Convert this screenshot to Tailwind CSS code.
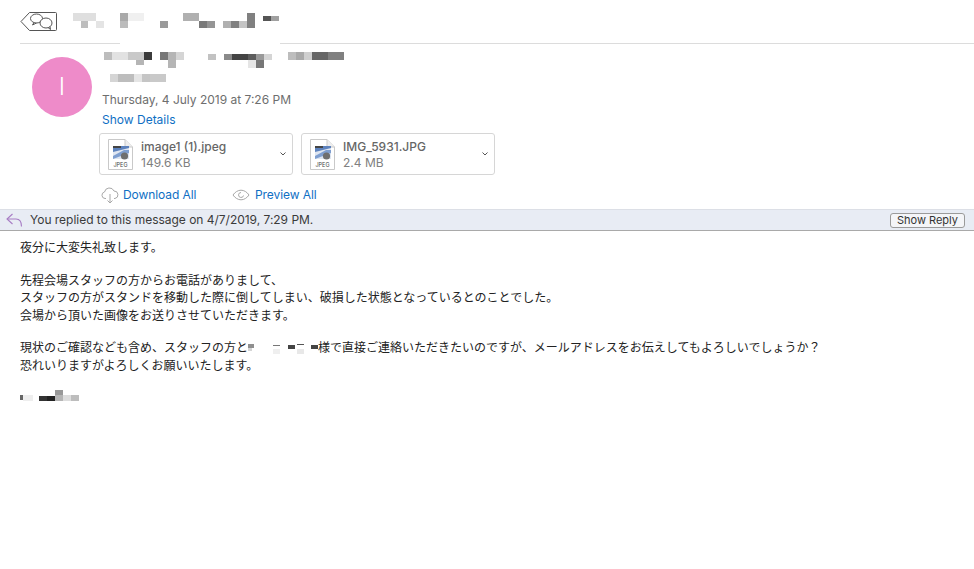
<!DOCTYPE html>
<html lang="en">
<head>
  <meta charset="UTF-8">
  <meta name="viewport" content="width=device-width, initial-scale=1.0">
  <script src="https://cdn.jsdelivr.net/npm/@tailwindcss/browser@4"></script>
  <title>Mail message</title>
</head>
<body class="bg-white font-['Inter','Noto_Sans_CJK_JP',sans-serif] overflow-hidden">
  <div class="w-[974px] h-[569px] flex flex-col">

    <!-- toolbar -->
    <header class="h-[44px] ml-[20px] flex items-start gap-[14px] border-b border-[#dcdcdc] relative">
      <svg class="mt-[11px]" width="37" height="21" viewBox="0 0 37 21" fill="none" stroke="#555" stroke-width="1">
        <path d="M1 10.500 9.500 1.500H35.500a1 1 0 0 1 1 1V18.500a1 1 0 0 1-1 1H9.500Z"/>
        <ellipse cx="16.500" cy="7.500" rx="6" ry="4.500"/>
        <path d="M14 11.500 12.500 14 16.500 12"/>
        <ellipse cx="26" cy="12" rx="6" ry="5" fill="#fff"/>
        <path d="M28 16.500 30.500 18.500 30 15.500"/>
      </svg>
      <svg class="mt-[13px]" width="210" height="17" viewBox="0 0 210 17">
        <rect x="2" y="0" width="23" height="8" fill="#dfdfdf"/><rect x="10" y="8" width="7" height="7" fill="#bdbdbd"/><rect x="25" y="8" width="8" height="7" fill="#e4e4e4"/>
        <rect x="49" y="0" width="8" height="8" fill="#a9a9a9"/><rect x="49" y="8" width="8" height="7" fill="#bcbcbc"/><rect x="57" y="0" width="16" height="8" fill="#f0f0f0"/>
        <rect x="89" y="8" width="8" height="7" fill="#9a9a9a"/><rect x="112" y="0" width="16" height="8" fill="#b0b0b0"/><rect x="128" y="8" width="8" height="7" fill="#7a7a7a"/><rect x="136" y="8" width="8" height="7" fill="#959595"/>
        <rect x="152" y="8" width="8" height="7" fill="#b0b0b0"/><rect x="160" y="8" width="8" height="7" fill="#808080"/><rect x="168" y="8" width="8" height="7" fill="#c4c4c4"/><rect x="176" y="0" width="8" height="15" fill="#808080"/>
        <rect x="192" y="3" width="8" height="5" fill="#555"/><rect x="200" y="3" width="8" height="5" fill="#a0a0a0"/>
      </svg>
      <div class="absolute left-[100px] top-[42px] w-[160px] h-[3px] bg-white"></div>
    </header>

    <!-- sender -->
    <section class="h-[165px] flex">
      <div class="ml-[32px] mt-[13px] w-[60px] h-[60px] rounded-full bg-[#ee8bc9] flex items-center justify-center text-white text-[24px] font-light">I</div>
      <div class="ml-[7px] flex-1 flex flex-col items-start">
        <div class="pl-[3px] h-[24px] pt-[8px]">
          <svg class="block" width="245" height="18" viewBox="0 0 245 18">
            <rect x="2" y="0" width="8" height="8" fill="#bdbdbd"/><rect x="10" y="0" width="16" height="8" fill="#e2e2e2"/><rect x="26" y="0" width="16" height="8" fill="#c9c9c9"/><rect x="34" y="8" width="8" height="5" fill="#b5b5b5"/><rect x="42" y="0" width="8" height="8" fill="#3b3b3b"/>
            <rect x="58" y="0" width="8" height="8" fill="#777"/><rect x="66" y="0" width="8" height="16" fill="#b5b5b5"/><rect x="74" y="0" width="8" height="8" fill="#d5d5d5"/>
            <rect x="106" y="2" width="8" height="6" fill="#c2c2c2"/><rect x="122" y="2" width="8" height="6" fill="#8a8a8a"/><rect x="130" y="2" width="16" height="6" fill="#444"/><rect x="146" y="2" width="8" height="6" fill="#5d5d5d"/><rect x="154" y="2" width="8" height="6" fill="#999"/><rect x="154" y="8" width="8" height="8" fill="#777"/><rect x="146" y="8" width="8" height="8" fill="#e5e5e5"/><rect x="162" y="2" width="8" height="6" fill="#d5d5d5"/>
            <rect x="186" y="0" width="8" height="8" fill="#bdbdbd"/><rect x="194" y="0" width="8" height="8" fill="#a9a9a9"/><rect x="202" y="0" width="8" height="8" fill="#cfcfcf"/><rect x="210" y="0" width="16" height="8" fill="#666"/><rect x="226" y="0" width="16" height="8" fill="#808080"/>
          </svg>
        </div>
        <div class="pl-[3px] h-[21px] pt-[5px]">
          <svg class="block" width="66" height="11" viewBox="0 0 66 11">
            <rect x="8" y="1" width="8" height="8" fill="#d5d5d5"/><rect x="16" y="1" width="16" height="8" fill="#bdbdbd"/><rect x="32" y="1" width="8" height="8" fill="#e5e5e5"/><rect x="40" y="1" width="8" height="8" fill="#c5c5c5"/><rect x="48" y="1" width="16" height="8" fill="#c9c9c9"/>
          </svg>
        </div>
        <p class="pl-[3px] h-[21px] text-[12px] leading-[21px] text-[#6e6e6e]">Thursday, 4 July 2019 at 7:26 PM</p>
        <a class="pl-[3px] h-[20px] text-[12px] leading-[20px] text-[#0f6fc4]">Show Details</a>

        <!-- attachments -->
        <div class="mt-[3px] flex gap-[8px]">
          <div class="w-[194px] h-[42px] border border-[#d6d6d6] rounded-[3px] flex items-center pl-[8px] pr-[6px]">
            <svg width="25" height="31" viewBox="0 0 25 31">
              <path d="M.5.500H17L24.500 8V30.500H.5Z" fill="#fff" stroke="#c9c9c9"/><path d="M17 .5V8h7.500" fill="#eee" stroke="#c9c9c9"/>
              <rect x="5" y="7" width="16" height="13" fill="#dfe6f1"/><path d="M5 7h16v2L5 13z" fill="#5d82bd"/><path d="M5 17 16 11h5v3L5 20z" fill="#7f9fd0"/><circle cx="16.500" cy="17" r="3.600" fill="#6f6f6f"/><rect x="5" y="7" width="8" height="2" fill="#444"/>
              <text x="12.500" y="28" text-anchor="middle" font-size="5.500" fill="#444" font-family="Inter">JPEG</text>
            </svg>
            <div class="ml-[8px] flex-1 pt-[2px]">
              <p class="text-[12px] leading-[16px] font-medium text-[#666]">image1 (1).jpeg</p>
              <p class="text-[12px] leading-[16px] text-[#808080]">149.6 KB</p>
            </div>
            <svg width="6" height="4" viewBox="0 0 6 4" fill="none" stroke="#555"><path d="M.5.500 3 3 5.500.500"/></svg>
          </div>
          <div class="w-[194px] h-[42px] border border-[#d6d6d6] rounded-[3px] flex items-center pl-[8px] pr-[6px]">
            <svg width="25" height="31" viewBox="0 0 25 31">
              <path d="M.5.500H17L24.500 8V30.500H.5Z" fill="#fff" stroke="#c9c9c9"/><path d="M17 .5V8h7.500" fill="#eee" stroke="#c9c9c9"/>
              <rect x="5" y="7" width="16" height="13" fill="#dfe6f1"/><path d="M5 7h16v2L5 13z" fill="#5d82bd"/><path d="M5 17 16 11h5v3L5 20z" fill="#7f9fd0"/><circle cx="16.500" cy="17" r="3.600" fill="#6f6f6f"/><rect x="5" y="7" width="8" height="2" fill="#444"/>
              <text x="12.500" y="28" text-anchor="middle" font-size="5.500" fill="#444" font-family="Inter">JPEG</text>
            </svg>
            <div class="ml-[8px] flex-1 pt-[2px]">
              <p class="text-[12px] leading-[16px] font-medium text-[#666]">IMG_5931.JPG</p>
              <p class="text-[12px] leading-[16px] text-[#808080]">2.4 MB</p>
            </div>
            <svg width="6" height="4" viewBox="0 0 6 4" fill="none" stroke="#555"><path d="M.5.500 3 3 5.500.500"/></svg>
          </div>
        </div>

        <div class="mt-[10px] flex items-center text-[12px] leading-[19px] text-[#0f6fc4]">
          <svg class="ml-[2px]" width="18" height="18" viewBox="0 0 18 18" fill="none" stroke="#a8a8a8">
            <path d="M5 12.500H4a3.300 3.300 0 0 1-.5-6.500 5 5 0 0 1 9.500-1 3.800 3.800 0 0 1 1 7.500h-1"/><path d="M9 8v9M6.500 14.500 9 17l2.500-2.500"/>
          </svg>
          <span class="ml-[4px] w-[109px] tracking-[-0.08px]">Download All</span>
          <svg width="18" height="12" viewBox="0 0 18 12" fill="none" stroke="#a8a8a8">
            <path d="M1 6c2-3 5-4.800 8-4.800S15 3 17 6c-2 3-5 4.800-8 4.800S3 9 1 6Z"/><path d="M11.500 6.500A2.500 2.500 0 1 1 9 3.500"/>
          </svg>
          <span class="ml-[5px] tracking-[-0.08px]">Preview All</span>
        </div>
      </div>
    </section>

    <!-- replied banner -->
    <div class="h-[22px] bg-[#e8ecf4] border-t border-[#dcdfe6] border-b-[#a9a9a9] border-b flex items-center text-[12px] text-[#3a3a3a]">
      <svg class="ml-[6px]" width="17" height="15" viewBox="0 0 17 15" fill="none" stroke="#a77cc4" stroke-width="1.100">
        <path d="M6.500 1 1 6l5.500 5"/><path d="M1 6h9c3.500 0 5.500 2.500 5.500 7.500"/>
      </svg>
      <span class="ml-[7px] tracking-[-0.02px]">You replied to this message on 4/7/2019, 7:29 PM.</span>
      <button class="ml-auto mr-[9px] w-[75px] h-[15px] border border-[#9a9a9a] rounded-[3px] bg-[#f4f5f8] text-[11px] leading-[13px] text-[#333]">Show Reply</button>
    </div>

    <!-- message body -->
    <main class="pl-[20px] pt-[8px] text-[12px] leading-[17.5px] text-[#222]">
      <p class="mb-[15px]">夜分に大変失礼致します。</p>
      <p class="mb-[15px]">先程会場スタッフの方からお電話がありまして、<br>スタッフの方がスタンドを移動した際に倒してしまい、破損した状態となっているとのことでした。<br>会場から頂いた画像をお送りさせていただきます。</p>
      <p class="mb-[15px]">現状のご確認なども含め、スタッフの方と<svg class="inline-block align-[-2px]" width="70" height="12" viewBox="0 0 70 12"><rect x="0" y="2" width="6" height="4" fill="#8f8f8f"/><rect x="0" y="6" width="4" height="3" fill="#d5d5d5"/><rect x="25" y="3" width="7" height="1" fill="#777"/><rect x="25" y="7" width="7" height="5" fill="#efefef"/><rect x="40" y="3" width="7" height="4" fill="#444"/><rect x="49" y="2" width="7" height="1" fill="#555"/><rect x="49" y="7" width="7" height="5" fill="#e8e8e8"/><rect x="63" y="3" width="7" height="4" fill="#444"/></svg>様で直接ご連絡いただきたいのですが、メールアドレスをお伝えしてもよろしいでしょうか？<br>恐れいりますがよろしくお願いいたします。</p>
      <svg class="block" width="60" height="14" viewBox="0 0 60 14">
        <rect x="0" y="6" width="3" height="5" fill="#666"/><rect x="3" y="6" width="10" height="6" fill="#eee"/><rect x="19" y="7" width="8" height="5" fill="#333"/><rect x="27" y="7" width="8" height="5" fill="#222"/><rect x="35" y="1" width="8" height="5" fill="#999"/><rect x="35" y="6" width="8" height="6" fill="#b5b5b5"/><rect x="43" y="6" width="8" height="6" fill="#ddd"/><rect x="51" y="6" width="8" height="6" fill="#bdbdbd"/>
      </svg>
    </main>
  </div>
</body>
</html>
